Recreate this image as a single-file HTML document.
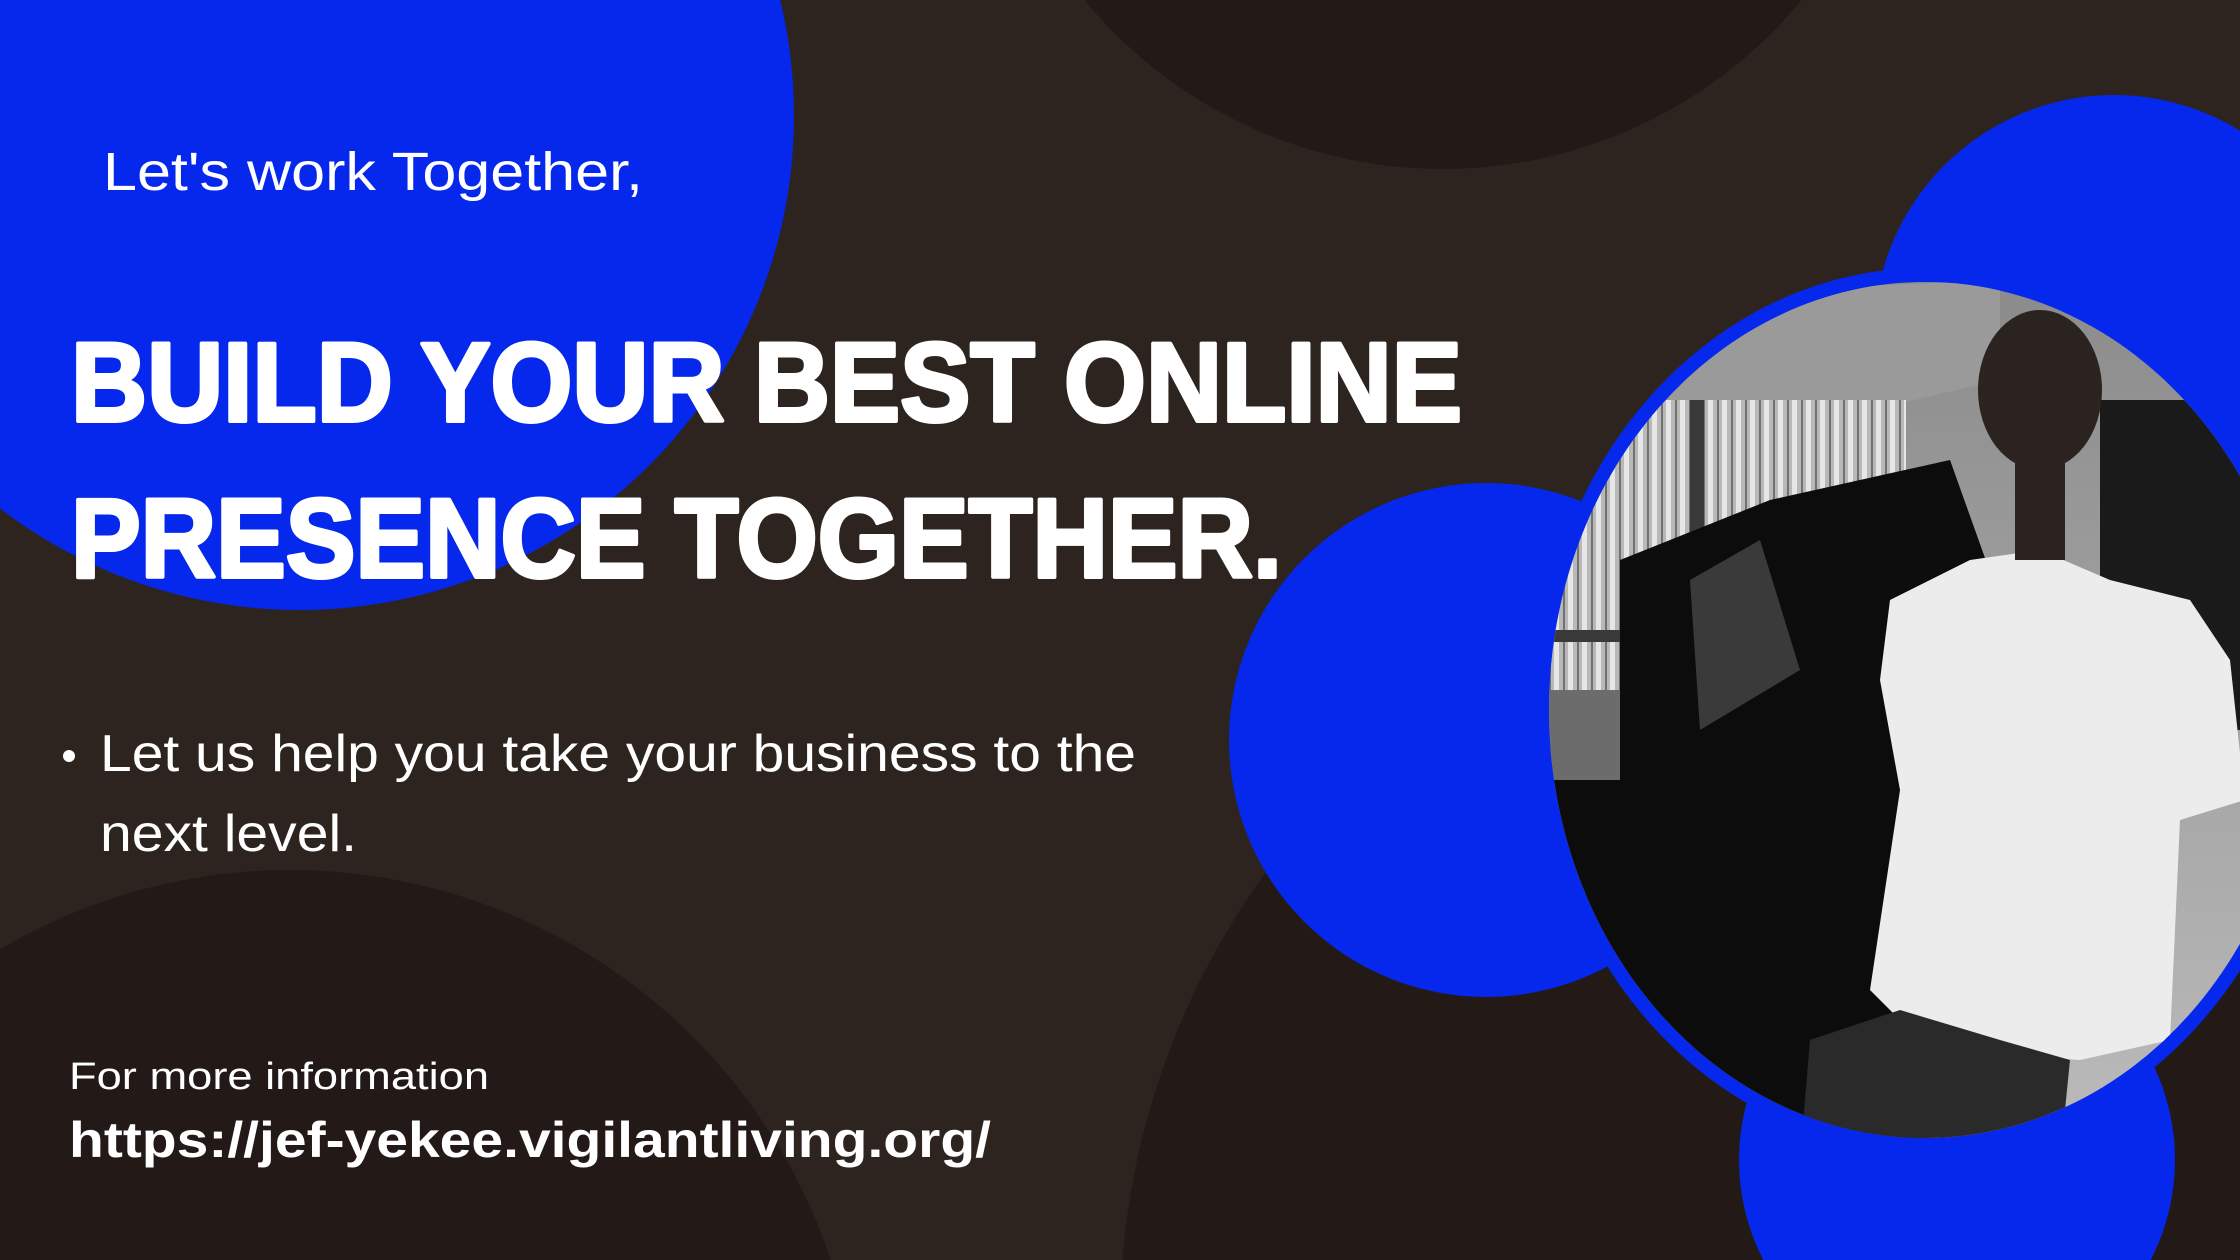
<!DOCTYPE html>
<html><head><meta charset="utf-8"><style>
html,body{margin:0;padding:0;background:#2d2420;overflow:hidden;width:2240px;height:1260px}
svg{display:block}
</style></head><body>
<svg width="2240" height="1260" viewBox="0 0 2240 1260" xmlns="http://www.w3.org/2000/svg">
<defs>
<clipPath id="ph"><ellipse cx="1925" cy="710" rx="376" ry="428"/></clipPath>
<pattern id="str" width="14" height="20" patternUnits="userSpaceOnUse">
<rect width="14" height="20" fill="#b8b8b8"/><rect width="5" height="20" fill="#e6e6e6"/><rect x="9" width="2" height="20" fill="#707070"/>
</pattern>
<linearGradient id="wall" x1="0" y1="0" x2="0" y2="1"><stop offset="0" stop-color="#8a8a8a"/><stop offset="1" stop-color="#bcbcbc"/></linearGradient>
</defs>
<rect width="2240" height="1260" fill="#2d2420"/>
<circle cx="1443" cy="-296" r="465" fill="#231a18"/>
<circle cx="1880" cy="1320" r="760" fill="#231a18"/>
<circle cx="290" cy="1440" r="570" fill="#231a18"/>
<circle cx="300" cy="116" r="494" fill="#0528ec"/>
<circle cx="2114" cy="335" r="240" fill="#0528ec"/>
<circle cx="1957" cy="1160" r="218" fill="#0528ec"/>
<ellipse cx="1925" cy="710" rx="390" ry="442" fill="#0528ec"/>
<circle cx="1486" cy="740" r="257" fill="#0528ec"/>
<g clip-path="url(#ph)">
<rect x="1546" y="260" width="700" height="900" fill="url(#wall)"/>
<polygon points="1546,300 2000,280 2000,380 1700,450 1546,480" fill="#9a9a9a"/>
<rect x="1546" y="400" width="360" height="290" fill="url(#str)"/>
<rect x="1690" y="400" width="14" height="330" fill="#3a3a3a"/>
<rect x="1546" y="630" width="360" height="12" fill="#3a3a3a"/>
<rect x="1546" y="690" width="180" height="130" fill="#6c6c6c"/>
<rect x="2100" y="400" width="150" height="330" fill="#1a1a1a"/>
<polygon points="1620,560 1770,500 1950,460 2000,600 1920,1150 1546,1150 1546,780 1620,780" fill="#0c0c0c"/>
<polygon points="1690,580 1760,540 1800,670 1700,730" fill="#3a3a3a"/>
<polygon points="1890,600 1970,560 2040,550 2110,580 2190,600 2230,660 2245,800 2180,820 2170,1040 2080,1060 1930,1050 1870,990 1900,790 1880,680" fill="#ececec"/>
<polygon points="1810,1040 1900,1010 2000,1040 2070,1060 2060,1160 1800,1160" fill="#2a2a2a"/>
<ellipse cx="2040" cy="390" rx="62" ry="80" fill="#2a2320"/>
<rect x="2015" y="450" width="50" height="110" fill="#2a2320"/>
</g>
<g fill="#ffffff" font-family="Liberation Sans, sans-serif">
<text x="103" y="190" font-size="54" textLength="540" lengthAdjust="spacingAndGlyphs">Let's work  Together,</text>
<g stroke="#ffffff" stroke-width="4" stroke-linejoin="round">
<text x="71" y="421" font-size="112" font-weight="bold" textLength="1391" lengthAdjust="spacingAndGlyphs">BUILD YOUR BEST ONLINE</text>
<text x="71" y="577" font-size="112" font-weight="bold" textLength="1211" lengthAdjust="spacingAndGlyphs">PRESENCE TOGETHER.</text>
</g>
<circle cx="69" cy="756" r="6"/>
<text x="100" y="771" font-size="52" textLength="1036" lengthAdjust="spacingAndGlyphs">Let us help you take your business to the</text>
<text x="100" y="851" font-size="52" textLength="257" lengthAdjust="spacingAndGlyphs">next level.</text>
<text x="69" y="1089" font-size="38" textLength="420" lengthAdjust="spacingAndGlyphs">For more information</text>
<text x="69" y="1157" font-size="50" font-weight="bold" textLength="922" lengthAdjust="spacingAndGlyphs">https://jef-yekee.vigilantliving.org/</text>
</g>
</svg>
</body></html>
